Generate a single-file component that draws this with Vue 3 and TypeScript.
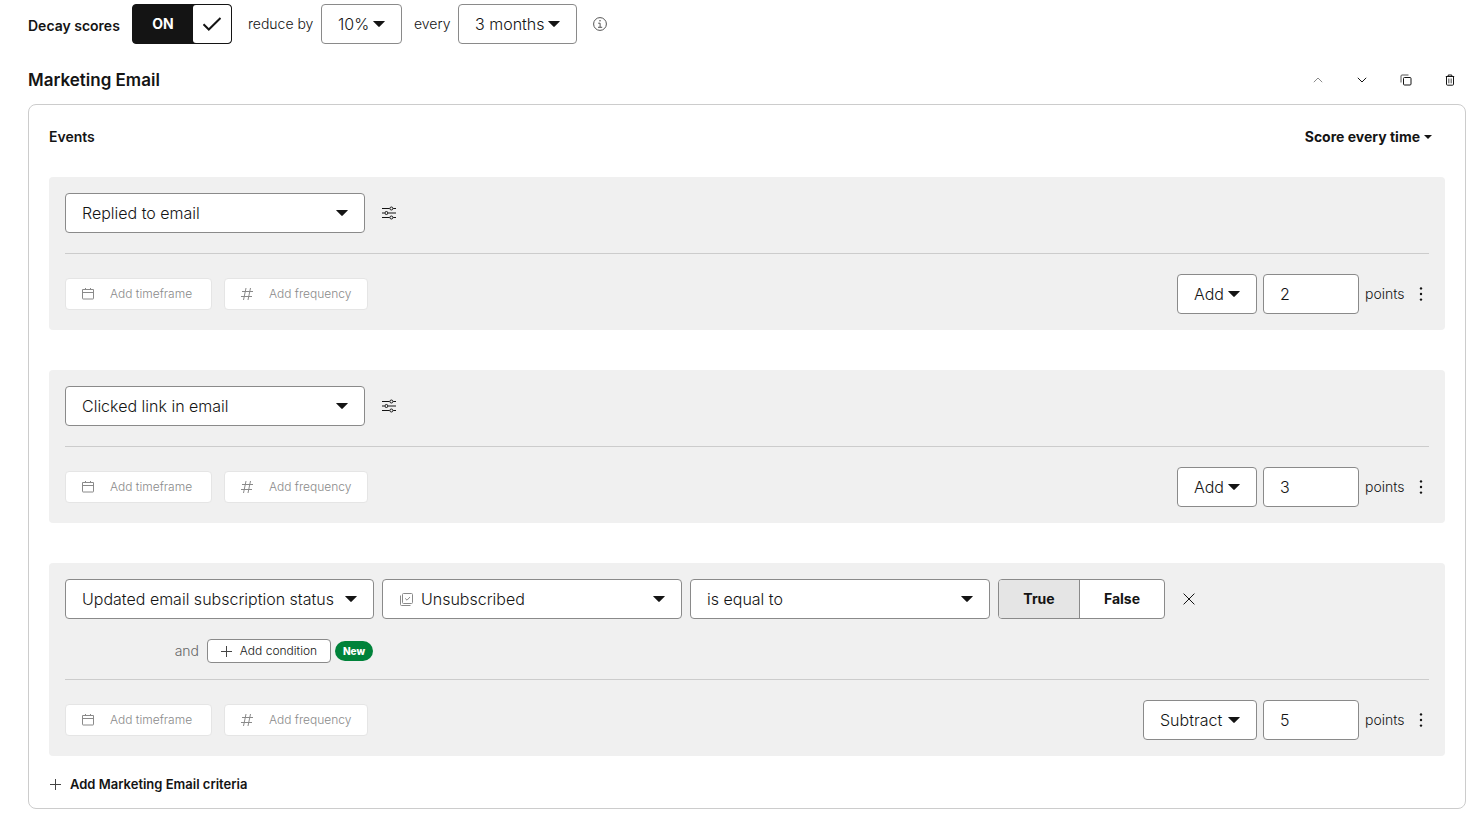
<script setup lang="ts">
import { ref } from 'vue'

interface Criterion {
  id: string
  event: string
  condition: boolean
  action: string
  points: string
}

const decay = ref(true)
const subscribed = ref(true)
const criteria = ref<Criterion[]>([
  { id: 'replied', event: 'Replied to email', condition: false, action: 'Add', points: '2' },
  { id: 'clicked', event: 'Clicked link in email', condition: false, action: 'Add', points: '3' },
  { id: 'updated', event: 'Updated email subscription status', condition: true, action: 'Subtract', points: '5' },
])
</script>

<template>
  <main class="page">
    <div class="decay">
      <span id="decay-label" class="decay-label">Decay scores</span>
      <label class="toggle">
        <input v-model="decay" type="checkbox" role="switch" aria-labelledby="decay-label" />
        <span class="toggle-text">ON</span>
        <span class="toggle-knob">
          <svg width="20" height="16" viewBox="0 0 20 16"><path d="M1.5 8.2 6.8 13.5 18.5 2" fill="none" stroke="#141414" stroke-width="2" /></svg>
        </span>
      </label>
      <label class="small-text reduce" for="decay-amount">reduce by</label>
      <span class="select w-percent">
        <select id="decay-amount"><option>10%</option></select>
        <svg class="caret" width="12" height="6" viewBox="0 0 12 6"><path d="M.6 0h10.8q.8 0 .3.6L6.7 5.6q-.7.6-1.4 0L.3.6Q-.2 0 .6 0Z" /></svg>
      </span>
      <label class="small-text every" for="decay-period">every</label>
      <span class="select w-months">
        <select id="decay-period"><option>3 months</option></select>
        <svg class="caret" width="12" height="6" viewBox="0 0 12 6"><path d="M.6 0h10.8q.8 0 .3.6L6.7 5.6q-.7.6-1.4 0L.3.6Q-.2 0 .6 0Z" /></svg>
      </span>
      <button class="icon-button info" type="button" aria-label="More information">
        <svg width="14" height="14" viewBox="0 0 14 14" fill="none" stroke="#555"><circle cx="7" cy="7" r="6.4" /><path d="M5.2 6.2h1.9v4M5 10.3h4.2" /><circle cx="7" cy="3.8" r=".8" fill="#555" stroke="none" /></svg>
      </button>
    </div>

    <header class="group-header">
      <h2>Marketing Email</h2>
      <div class="group-actions">
        <button class="icon-button action" type="button" aria-label="Move up" disabled>
          <svg width="12" height="12" viewBox="0 0 12 12" fill="none" stroke="#8a8a8a"><path d="M1.8 8.2 6 4l4.2 4.2" /></svg>
        </button>
        <button class="icon-button action" type="button" aria-label="Move down">
          <svg width="12" height="12" viewBox="0 0 12 12" fill="none" stroke="#141414"><path d="M1.8 3.8 6 8l4.2-4.2" /></svg>
        </button>
        <button class="icon-button action" type="button" aria-label="Duplicate">
          <svg width="12" height="12" viewBox="0 0 12 12" fill="none" stroke="#141414"><rect x="3.5" y="3.5" width="7.5" height="7.5" rx="1" /><path d="M1 8.5V2q0-1 1-1h6.5" stroke="#555" /></svg>
        </button>
        <button class="icon-button action" type="button" aria-label="Delete">
          <svg width="12" height="12" viewBox="0 0 12 12" fill="none" stroke="#141414"><path d="M1.8 2.5h8.4M4.2 2.3V1h3.6v1.3M2.5 2.5v7.7q0 1 1 1h5q1 0 1-1V2.5" /><path d="M4.5 4.5v4.8M6 4.5v4.8M7.5 4.5v4.8" stroke="#666" stroke-width=".8" /></svg>
        </button>
      </div>
    </header>

    <section class="card">
      <div class="card-header">
        <h3>Events</h3>
        <button class="score" type="button">
          Score every time
          <svg width="8" height="4" viewBox="0 0 8 4"><path d="M0 0h8L4 4Z" fill="#141414" /></svg>
        </button>
      </div>

      <div class="criteria">
        <article v-for="item in criteria" :key="item.id" class="criterion">
          <div class="filters">
            <span class="select" :class="item.condition ? 'w-status' : 'w-field'">
              <select aria-label="Event"><option>{{ item.event }}</option></select>
              <svg class="caret" width="12" height="6" viewBox="0 0 12 6"><path d="M.6 0h10.8q.8 0 .3.6L6.7 5.6q-.7.6-1.4 0L.3.6Q-.2 0 .6 0Z" /></svg>
            </span>
            <button v-if="!item.condition" class="icon-button tune" type="button" aria-label="Refine event">
              <svg width="14" height="14" viewBox="0 0 14 14" fill="none" stroke="#141414"><path d="M0 2.5h7.6M11.2 2.5H14M0 7h2.6M6.2 7H14M0 11.5h7.6M11.2 11.5H14" /><circle cx="9.4" cy="2.5" r="1.5" /><circle cx="4.4" cy="7" r="1.5" /><circle cx="9.4" cy="11.5" r="1.5" /></svg>
            </button>
            <template v-else>
              <span class="select w-field with-icon">
                <svg class="lead" width="13" height="13" viewBox="0 0 13 13" fill="none" stroke="#8a8a8a"><rect x="2.5" y=".5" width="10" height="10" rx="1" /><path d="M.5 2.5v9q0 1 1 1h9M5.2 5.4 7 7.2l3-3.2" /></svg>
                <select aria-label="Property"><option>Unsubscribed</option></select>
                <svg class="caret" width="12" height="6" viewBox="0 0 12 6"><path d="M.6 0h10.8q.8 0 .3.6L6.7 5.6q-.7.6-1.4 0L.3.6Q-.2 0 .6 0Z" /></svg>
              </span>
              <span class="select w-field">
                <select aria-label="Operator"><option>is equal to</option></select>
                <svg class="caret" width="12" height="6" viewBox="0 0 12 6"><path d="M.6 0h10.8q.8 0 .3.6L6.7 5.6q-.7.6-1.4 0L.3.6Q-.2 0 .6 0Z" /></svg>
              </span>
              <div class="segmented" role="group" aria-label="Value">
                <button type="button" :aria-pressed="subscribed" @click="subscribed = true">True</button>
                <button type="button" :aria-pressed="!subscribed" @click="subscribed = false">False</button>
              </div>
              <button class="icon-button close" type="button" aria-label="Remove condition">
                <svg width="12" height="12" viewBox="0 0 12 12" fill="none" stroke="#141414"><path d="m.6.6 10.8 10.8M11.4.6.6 11.4" /></svg>
              </button>
            </template>
          </div>

          <div v-if="item.condition" class="condition">
            <span class="and">and</span>
            <button class="add-condition" type="button">
              <svg width="11" height="11" viewBox="0 0 11 11" fill="none" stroke="#444"><path d="M0 5.5h11M5.5 0v11" /></svg>
              Add condition
            </button>
            <span class="badge">New</span>
          </div>

          <div class="footer">
            <button class="ghost w-timeframe" type="button">
              <svg width="12" height="12" viewBox="0 0 12 12" fill="none" stroke="#8a8a8a"><path d="M.5 1.5h11v9q0 .5-.5.5H1q-.5 0-.5-.5ZM.5 4.5h11M3.5 0v2M8.5 0v2" /></svg>
              Add timeframe
            </button>
            <button class="ghost w-frequency" type="button">
              <svg width="12" height="12" viewBox="0 0 12 12" fill="none" stroke="#8a8a8a"><path d="M1 3.5h11M0 8.5h11M5 0 2.5 12M9.5 0 7 12" /></svg>
              Add frequency
            </button>
            <div class="score-edit">
              <span class="select" :class="item.action === 'Add' ? 'w-add' : 'w-subtract'">
                <select aria-label="Action"><option>{{ item.action }}</option></select>
                <svg class="caret" width="12" height="6" viewBox="0 0 12 6"><path d="M.6 0h10.8q.8 0 .3.6L6.7 5.6q-.7.6-1.4 0L.3.6Q-.2 0 .6 0Z" /></svg>
              </span>
              <input :id="`points-${item.id}`" v-model="item.points" class="points" type="text" inputmode="numeric" />
              <label class="small-text points-label" :for="`points-${item.id}`">points</label>
              <button class="icon-button more" type="button" aria-label="More options">
                <svg width="4" height="14" viewBox="0 0 4 14" fill="#141414"><circle cx="2" cy="1.4" r="1.2" /><circle cx="2" cy="7" r="1.2" /><circle cx="2" cy="12.6" r="1.2" /></svg>
              </button>
            </div>
          </div>
        </article>
      </div>

      <button class="add-criteria" type="button">
        <svg width="13" height="11" viewBox="0 0 13 11" fill="none" stroke="#444"><path d="M1 5.5h11M6.5 0v11" /></svg>
        Add Marketing Email criteria
      </button>
    </section>
  </main>
</template>

<style>
body {
  margin: 0;
  background: #fff;
}
</style>

<style scoped>
.page {
  box-sizing: border-box;
  padding: 4px 9px 6px 28px;
  font-family: Inter, "Open Sans", sans-serif;
  font-size: 14px;
  font-weight: 300;
  line-height: 20px;
  color: #141414;
}
.page *,
.page *::before {
  box-sizing: border-box;
}
button,
input,
select {
  margin: 0;
  padding: 0;
  border: 0;
  background: none;
  color: inherit;
  font: inherit;
}
button,
select,
.toggle {
  cursor: pointer;
}
svg {
  display: block;
  flex: none;
}
h2,
h3 {
  margin: 0;
  font-weight: 600;
}
h2 {
  font-size: 17px;
  line-height: 24px;
}
h3 {
  font-size: 14px;
  line-height: 20px;
}
.decay {
  display: flex;
  align-items: center;
}
.decay-label {
  width: 104px;
  padding-top: 4px;
  font-weight: 600;
}
.toggle {
  display: flex;
  width: 100px;
  height: 40px;
  border: 1px solid #141414;
  border-radius: 4px;
  background: #141414;
  overflow: hidden;
}
.toggle input {
  appearance: none;
  width: 0;
  height: 0;
}
.toggle-text {
  flex: 1;
  color: #fff;
  font-weight: 700;
  line-height: 38px;
  text-align: center;
}
.toggle-knob {
  display: flex;
  align-items: center;
  justify-content: center;
  width: 38px;
  border-radius: 3px;
  background: #fff;
}
.small-text {
  white-space: nowrap;
}
.reduce {
  width: 89px;
  padding-left: 16px;
}
.every {
  width: 56px;
  padding-left: 12px;
}
.select {
  display: grid;
  align-items: center;
  height: 40px;
  border: 1px solid #8a8a8a;
  border-radius: 4px;
  background: #fff;
}
.select select {
  grid-area: 1 / 1;
  appearance: none;
  width: 100%;
  height: 38px;
  padding: 0 28px 0 16px;
  font-size: 16px;
}
.select .caret {
  grid-area: 1 / 1;
  justify-self: end;
  margin-right: 16px;
  fill: #141414;
  pointer-events: none;
}
.with-icon select {
  padding-left: 38px;
}
.with-icon .lead {
  grid-area: 1 / 1;
  margin-left: 17px;
  pointer-events: none;
}
.w-percent {
  width: 81px;
}
.w-months {
  width: 119px;
}
.w-field {
  width: 300px;
}
.w-status {
  width: 309px;
}
.w-add {
  width: 80px;
}
.w-subtract {
  width: 114px;
}
.icon-button {
  display: flex;
  align-items: center;
  justify-content: center;
  height: 24px;
}
.info {
  margin-left: 16px;
}
.group-header,
.card-header {
  display: flex;
  align-items: center;
  justify-content: space-between;
}
.group-header {
  padding: 24px 0 12px;
}
.group-actions {
  display: flex;
  gap: 12px;
}
.action {
  width: 32px;
}
.card {
  padding: 22px 20px 14px;
  border: 1px solid #ccc;
  border-radius: 8px;
}
.card-header {
  margin-bottom: 30px;
}
.score {
  display: flex;
  align-items: center;
  gap: 4px;
  padding-right: 13px;
  font-weight: 700;
}
.criteria {
  display: flex;
  flex-direction: column;
  gap: 40px;
}
.criterion {
  padding: 16px;
  border-radius: 4px;
  background: #f0f0f0;
}
.filters {
  display: flex;
  align-items: center;
  gap: 8px;
}
.tune,
.close {
  width: 32px;
}
.segmented {
  display: flex;
  width: 167px;
  height: 40px;
  border: 1px solid #8a8a8a;
  border-radius: 4px;
  background: #fff;
  overflow: hidden;
}
.segmented button {
  width: 80px;
  font-weight: 700;
}
.segmented button + button {
  flex: 1;
  border-left: 1px solid #8a8a8a;
}
.segmented button[aria-pressed="true"] {
  background: #e5e5e5;
}
.condition {
  display: flex;
  align-items: center;
  gap: 4px;
  margin: 20px 0 -4px;
}
.and {
  width: 134px;
  margin-right: 4px;
  color: #666;
  text-align: right;
}
.add-condition {
  display: flex;
  align-items: center;
  justify-content: center;
  gap: 8px;
  width: 124px;
  height: 24px;
  border: 1px solid #8a8a8a;
  border-radius: 4px;
  background: #fff;
  font-size: 12px;
}
.badge {
  width: 38px;
  border-radius: 10px;
  background: #00823a;
  color: #fff;
  font-size: 10px;
  font-weight: 800;
  text-align: center;
}
.footer {
  display: flex;
  align-items: center;
  gap: 12px;
  margin-top: 20px;
  padding-top: 20px;
  border-top: 1px solid #ccc;
}
.ghost {
  display: flex;
  align-items: center;
  gap: 16px;
  height: 32px;
  padding: 0 16px;
  border: 1px solid #e5e5e5;
  border-radius: 4px;
  background: #fff;
  color: #8a8a8a;
  font-size: 12px;
  white-space: nowrap;
}
.w-timeframe {
  width: 147px;
}
.w-frequency {
  width: 144px;
}
.score-edit {
  display: flex;
  align-items: center;
  gap: 6px;
  margin-left: auto;
}
.points {
  width: 96px;
  height: 40px;
  padding: 0 16px;
  border: 1px solid #8a8a8a;
  border-radius: 4px;
  background: #fff;
  font-size: 16px;
}
.points-label {
  width: 42px;
}
.more {
  width: 16px;
}
.add-criteria {
  display: flex;
  align-items: center;
  gap: 8px;
  margin-top: 18px;
  font-size: 13px;
  font-weight: 600;
}
</style>
